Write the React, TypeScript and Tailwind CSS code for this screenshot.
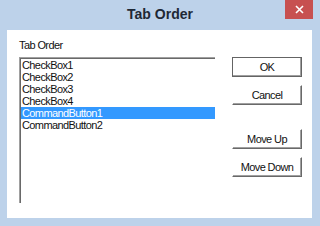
import React from "react";

const ITEMS = ["CheckBox1", "CheckBox2", "CheckBox3", "CheckBox4", "CommandButton1", "CommandButton2"];
const SELECTED = 4;

const font = { fontFamily: '"Liberation Sans", Arial, sans-serif' };

function Button({ label, isDefault, className }: { label: string; isDefault?: boolean; className?: string }) {
  return (
    <button
      className={
        "w-[70px] h-[20px] flex items-center justify-center bg-white text-[11px] tracking-[-0.6px] text-[#111] " +
        (isDefault
          ? "border border-[#646464] shadow-[inset_-1px_-1px_0_#a0a0a0] "
          : "border border-t-white border-l-white border-r-[#696969] border-b-[#696969] shadow-[inset_-1px_-1px_0_#a0a0a0] ") +
        (className ?? "")
      }
    >
      {label}
    </button>
  );
}

export default function App() {
  return (
    <div className="w-[320px] h-[226px] bg-[#bdd2ea] flex flex-col pl-[7px] pr-[8px] pb-[8px]" style={font}>
      <div className="relative h-[30px] shrink-0 flex items-center justify-center -ml-[7px] -mr-[8px]">
        <span className="text-[14px] font-bold text-[#1e2835] -mt-[1px]">Tab Order</span>
        <div className="absolute top-0 right-[7px] w-[28px] h-[19px] bg-[#c75050] flex items-center justify-center">
          <svg width="9" height="9" viewBox="0 0 9 9">
            <path d="M1 1L8 8M8 1L1 8" stroke="white" strokeWidth="1.6" />
          </svg>
        </div>
      </div>

      <div className="flex-1 bg-white flex pl-[12px] pt-[9px]">
        <div className="flex flex-col">
          <div className="h-[13px] mb-[5px] text-[11px] tracking-[-0.6px] text-[#111] leading-[13px]">Tab Order</div>
          <div className="w-[196px] h-[146px] border-l border-t border-[#a0a0a0] shadow-[inset_1px_1px_0_#696969] pl-[1px] pt-[1px]">
            {ITEMS.map((item, i) => (
              <div
                key={item}
                className={
                  "h-[12px] leading-[12px] pl-[1px] text-[11px] tracking-[-0.6px] " +
                  (i === SELECTED ? "bg-[#3399ff] text-white" : "text-[#111]")
                }
              >
                {item}
              </div>
            ))}
          </div>
        </div>

        <div className="flex flex-col ml-[17px] pt-[18px]">
          <Button label="OK" isDefault />
          <Button label="Cancel" className="mt-[8px]" />
          <Button label="Move Up" className="mt-[24px]" />
          <Button label="Move Down" className="mt-[8px]" />
        </div>
      </div>
    </div>
  );
}
